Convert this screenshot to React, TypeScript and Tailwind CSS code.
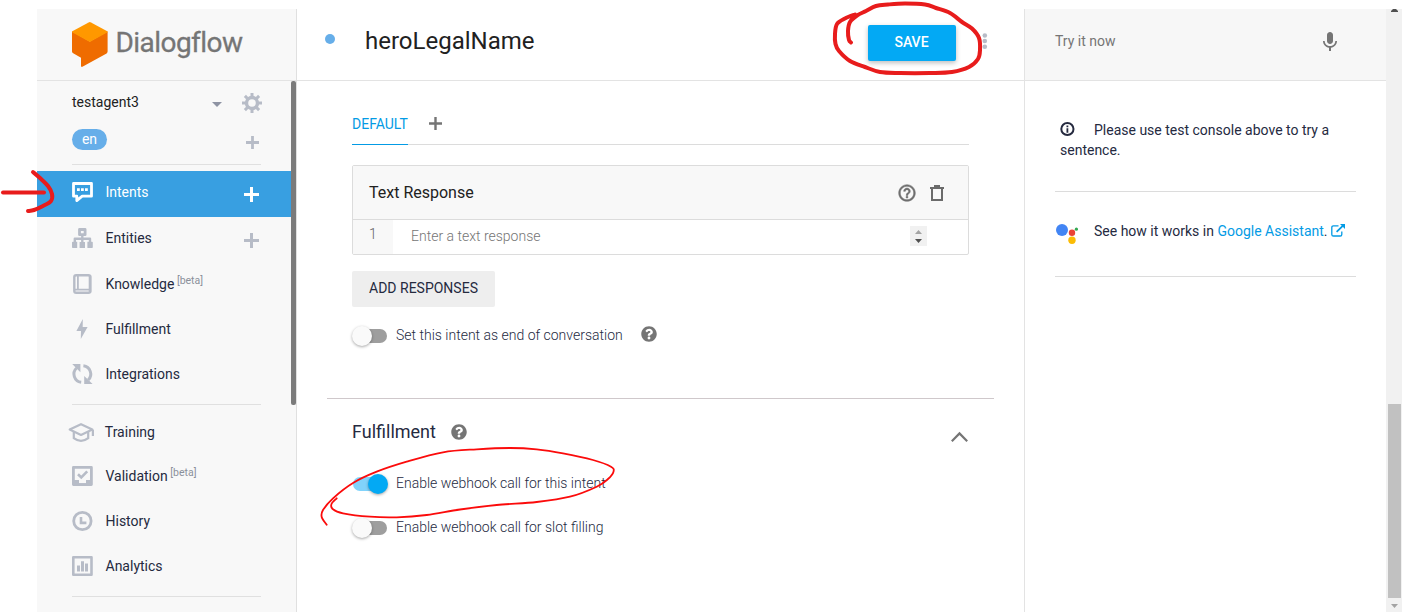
import React from "react";
import { FaQuestionCircle } from "react-icons/fa";

type Point = [number, number];

function smooth(points: Point[]): string {
  let d = `M${points[0][0]} ${points[0][1]}`;
  for (let i = 0; i < points.length - 1; i++) {
    const p0 = points[Math.max(i - 1, 0)];
    const p1 = points[i];
    const p2 = points[i + 1];
    const p3 = points[Math.min(i + 2, points.length - 1)];
    d += ` C${p1[0] + (p2[0] - p0[0]) / 6} ${p1[1] + (p2[1] - p0[1]) / 6} ${p2[0] - (p3[0] - p1[0]) / 6} ${p2[1] - (p3[1] - p1[1]) / 6} ${p2[0]} ${p2[1]}`;
  }
  return d;
}

const saveLoop: Point[] = [
  [855, 14.5], [845, 18.5], [837, 24], [835, 34], [835.5, 44], [839, 51], [850, 61], [865, 67], [880, 72], [900, 73],
  [930, 73], [952, 72], [969, 67], [978, 59], [980, 50], [979, 38], [972, 28.5], [962, 22], [950, 13], [936, 8],
  [925, 4.5], [905, 3.5], [888, 4.5], [876, 6], [866, 11], [857, 15.5], [850, 22], [848, 31], [849, 40], [851, 42.5],
];
const arrowHead: Point[] = [[33, 172], [40, 178], [48, 186], [52, 194], [51, 201], [43, 206], [34, 210], [28, 211]];
const webhookLoop: Point[] = [
  [326.7, 524.7], [321.7, 517], [323, 510], [333, 498.3], [353, 483], [376.7, 471.7], [406.7, 461.7], [443, 452.3],
  [476.7, 449.3], [510, 448], [536.7, 449.3], [563, 453.3], [593, 460], [611, 466.7], [613.5, 471.7], [608, 479],
  [596.7, 486.7], [570, 496.7], [536.7, 502], [496.7, 505], [460, 509.5], [426.7, 515], [396.7, 517.3], [370, 516.7],
  [343, 513.3], [332.7, 509], [331.5, 504], [336.7, 498.3],
];

const Svg = ({ w, h, children }: { w: number; h: number; children: React.ReactNode }) => (
  <svg width={w} height={h} viewBox={`0 0 ${w} ${h}`} fill="none" className="block shrink-0 overflow-visible">
    {children}
  </svg>
);

const Plus = ({ size, color, stroke }: { size: number; color: string; stroke: number }) => (
  <Svg w={size} h={size}>
    <path d={`M${size / 2} 0V${size}M0 ${size / 2}H${size}`} stroke={color} strokeWidth={stroke} />
  </Svg>
);

const G = "#b7bcc7";

const icons = {
  intents: (
    <Svg w={21} h={20}>
      <path d="M1.5 1.5H19.5V14.2H10.2L4.8 18.6V14.2H1.5Z" stroke="#fff" strokeWidth="2.8" strokeLinejoin="round" />
      <path d="M5 6.2h2.8v2.8H5zM9 6.2h2.8v2.8H9zM13 6.2h2.8v2.8h-2.8z" fill="#fff" />
    </Svg>
  ),
  entities: (
    <Svg w={21} h={20}>
      <path d="M7.5 1.5h5.6v5.2H7.5z" stroke={G} strokeWidth="2.8" strokeLinejoin="round" />
      <path d="M10.3 7V14M2.8 14.5V10.8H18V14.5" stroke={G} strokeWidth="2.4" strokeLinejoin="round" />
      <path d="M0 14.5q0-.8.8-.8H5.2V20H.8Q0 20 0 19.2zM7.6 14h5.4v6H7.6zM15.4 13.7H20q.8 0 .8.8V19.2q0 .8-.8.8H15.4z" fill={G} />
    </Svg>
  ),
  knowledge: (
    <Svg w={19} h={20}>
      <rect x="1.3" y="1.2" width="16" height="17.6" rx="1.8" stroke={G} strokeWidth="2.4" />
      <path d="M4.9 2v13.5M1.5 15.6H17" stroke={G} strokeWidth="1.8" />
      <path d="M17 1.5v17" stroke={G} strokeWidth="2.6" />
    </Svg>
  ),
  fulfillment: (
    <Svg w={12} h={20}>
      <path d="M6.8 0L.4 12H5L4.8 20L11.6 8H6.7Z" fill={G} />
    </Svg>
  ),
  integrations: (
    <Svg w={21} h={20}>
      <path d="M9.2 18.3A8.3 8.3 0 0 1 4.6 4M11.4 1.8A8.3 8.3 0 0 1 16.2 16" stroke={G} strokeWidth="3" />
      <path d="M.2 0H8.4V8.2ZM12.2 12V20H20.6Z" fill={G} />
    </Svg>
  ),
  training: (
    <Svg w={26} h={19}>
      <path d="M1.7 6.6L13 1.2L24.3 6.6L13 12Z" stroke={G} strokeWidth="2.2" strokeLinejoin="round" />
      <path d="M5.8 9V15.2Q9 17.8 13 17.8T20.2 15.2V9M24.9 6.8V13" stroke={G} strokeWidth="2.2" />
    </Svg>
  ),
  validation: (
    <Svg w={21} h={20}>
      <path d="M1.4 1.4H19.4V18.6H1.4Z" stroke={G} strokeWidth="2.8" strokeLinejoin="round" />
      <path d="M2 14H7V17.2H14V14H19V19H2Z" fill={G} />
      <path d="M6 8.2L9.3 11.4L15.2 5.4" stroke={G} strokeWidth="2.6" />
    </Svg>
  ),
  history: (
    <Svg w={21} h={20}>
      <circle cx="10.4" cy="10" r="8.7" stroke={G} strokeWidth="2.8" />
      <path d="M9 6V11.9H14.4" stroke={G} strokeWidth="2.6" />
    </Svg>
  ),
  analytics: (
    <Svg w={21} h={20}>
      <path d="M1.3 1.3H19.5V18.7H1.3Z" stroke={G} strokeWidth="2.6" strokeLinejoin="round" />
      <path d="M5 9.6h3V15.4H5zM9 5.2h3V15.4H9zM13 7.6h3V15.4h-3z" fill={G} />
    </Svg>
  ),
};

function NavRow({ icon, label, beta, plus, active, className }: {
  icon: React.ReactNode; label: string; beta?: boolean; plus?: boolean; active?: boolean; className: string;
}) {
  return (
    <div className={`flex items-center pl-[32px] pr-[32px] ${active ? "bg-[#389fe1] text-white" : "text-[#252a3f]"} ${className}`}>
      <span className="flex w-[26px] shrink-0 justify-center">{icon}</span>
      <span className="ml-[10.5px] text-[14px] leading-[20px]">{label}</span>
      {beta && <span className="mb-[7px] ml-[2.5px] text-[10.5px] leading-[12px] text-[#8b909b]">[beta]</span>}
      {plus && (
        <span className="mt-[4px] ml-auto">
          <Plus size={15} stroke={3} color={active ? "#fff" : G} />
        </span>
      )}
    </div>
  );
}

const Toggle = ({ on }: { on?: boolean }) => (
  <span className="relative block h-5 w-9 shrink-0">
    <span className={`absolute top-[3px] left-px h-[14px] w-[34px] rounded-full ${on ? "bg-[#81d3fb]" : "bg-[#9e9e9e]"}`} />
    <span className={`absolute top-0 h-5 w-5 rounded-full shadow-[0_1px_3px_rgba(0,0,0,0.35)] ${on ? "left-4 bg-[#03a9f4]" : "left-0 bg-[#fafafa]"}`} />
  </span>
);

function Sidebar() {
  return (
    <aside className="flex w-[260px] shrink-0 flex-col border-r border-[#e0e0e0] bg-[#f8f8f8]">
      <div className="flex h-[72px] shrink-0 items-start border-b border-[#e3e3e3] pl-[35px] pt-[13px]">
        <Svg w={36} h={45}>
          <path d="M0 9.2L17.8 19.5L35.6 9.2V29.5Q35.6 30.8 34.6 31.4L10.4 44.8Q9 45.4 9 43.8V35.8L1.2 31.3Q0 30.6 0 29.4Z" fill="#ef6c00" />
          <path d="M0 10.2Q0 9.6 .8 9.1L16.6 .4Q17.8-.2 19 .4L34.8 9.1Q35.6 9.6 35.6 10.2L17.8 20Z" fill="#ff9800" />
        </Svg>
        <span className="ml-[7.5px] mt-[4px] text-[28px] leading-[34px] tracking-[-0.55px] text-[#757575] [-webkit-text-stroke:0.3px_#757575] [font-variant-ligatures:none]">Dialogflow</span>
      </div>
      <div className="flex min-h-0 flex-1">
        <nav className="w-[254px] shrink-0">
          <div className="flex h-[43px] items-center pl-[35px] pr-[29px]">
            <span className="mb-[2px] text-[14px] leading-[20px] text-[#212121]">testagent3</span>
            <span className="mt-[3px] ml-auto mr-[20px]">
              <Svg w={10} h={5}><path d="M0 0H10L5 5Z" fill="#8e93a3" /></Svg>
            </span>
            <Svg w={20} h={20}>
              <circle cx="10" cy="10" r="5.5" stroke={G} strokeWidth="3.4" />
              <path d="M10 0V4M10 16V20M0 10H4M16 10H20M2.9 2.9L5.7 5.7M14.3 14.3L17.1 17.1M2.9 17.1L5.7 14.3M14.3 5.7L17.1 2.9" stroke={G} strokeWidth="3" />
            </Svg>
          </div>
          <div className="flex h-[31px] items-center pl-[35px] pr-[33px]">
            <span className="h-[21px] w-[35px] rounded-full bg-[#66aee9] text-center text-[14px] leading-[21px] text-white">en</span>
            <span className="ml-auto mt-[5px] mr-[-1px]"><Plus size={13} stroke={2.8} color={G} /></span>
          </div>
          <div className="mt-[9px] ml-[35px] mr-[30px] h-px bg-[#e0e0e0]" />
          <NavRow active plus icon={icons.intents} label="Intents" className="mt-[6px] h-[46px] pb-[4px]" />
          <NavRow plus icon={icons.entities} label="Entities" className="h-[46px] pb-[4px]" />
          <NavRow beta icon={icons.knowledge} label="Knowledge" className="h-[44px] pb-[2px]" />
          <NavRow icon={icons.fulfillment} label="Fulfillment" className="h-[44px]" />
          <NavRow icon={icons.integrations} label="Integrations" className="h-[46px]" />
          <div className="mt-[7px] ml-[35px] mr-[30px] h-px bg-[#e0e0e0]" />
          <NavRow icon={icons.training} label="Training" className="mt-[5px] -ml-[0.7px] h-[44px]" />
          <NavRow beta icon={icons.validation} label="Validation" className="h-[44px]" />
          <NavRow icon={icons.history} label="History" className="h-[46px]" />
          <NavRow icon={icons.analytics} label="Analytics" className="h-[44px]" />
          <div className="mt-[8px] ml-[35px] mr-[30px] h-px bg-[#e0e0e0]" />
        </nav>
        <div className="h-[324px] w-[5px] rounded-[2px] bg-[#7b7b7b]" />
      </div>
    </aside>
  );
}

function Main() {
  return (
    <main className="flex w-[728px] shrink-0 flex-col border-r border-[#e3e3e3] bg-white">
      <header className="flex h-[72px] items-center border-b border-[#e3e3e3] pl-[28px]">
        <span className="mb-[11px] h-[10px] w-[10px] rounded-full bg-[#66aee9]" />
        <span className="mb-[7px] ml-[30px] text-[24px] leading-[32px] text-[#212121]">heroLegalName</span>
        <button className="mb-[4px] ml-auto h-[36px] w-[88px] rounded-[2px] bg-[#03a9f4] pr-[1px] pb-[2px] text-[14px] font-medium leading-[34px] text-white shadow-[0_2px_5px_rgba(0,0,0,0.26)]">SAVE</button>
        <span className="mb-[8px] ml-[26px] mr-[37px]">
          <Svg w={5} h={16}>
            <circle cx="2.8" cy="2.5" r="2.3" fill={G} /><circle cx="2.8" cy="8" r="2.3" fill={G} /><circle cx="2.8" cy="13.7" r="2.3" fill={G} />
          </Svg>
        </span>
      </header>
      <section className="pl-[55px] pr-[55px] pt-[22px]">
        <div className="flex h-[42px] border-b border-[#dcdcdc]">
          <span className="-mb-px h-[42px] w-[56px] border-b border-[#039be5] text-[14px] leading-[42px] text-[#039be5]">DEFAULT</span>
          <span className="ml-[20.5px] mt-[13.5px]"><Plus size={13} stroke={2.4} color="#757575" /></span>
        </div>
        <div className="mt-[20px] rounded-[2px] border border-[#dcdcdc]">
          <div className="flex h-[54px] items-center border-b border-[#dcdcdc] bg-[#f8f8f8] pl-[16px] pr-[24px]">
            <span className="text-[16px] leading-[24px] text-[#212121]">Text Response</span>
            <svg width="20" height="20" viewBox="0 0 24 24" fill="#6e6e6e" stroke="#6e6e6e" strokeWidth="0.6" className="ml-auto">
              <path d="M11 18h2v-2h-2v2zm1-16C6.48 2 2 6.48 2 12s4.48 10 10 10 10-4.48 10-10S17.52 2 12 2zm0 18c-4.41 0-8-3.59-8-8s3.59-8 8-8 8 3.59 8 8-3.59 8-8 8zm0-14c-2.21 0-4 1.79-4 4h2c0-1.1.9-2 2-2s2 .9 2 2c0 2-3 1.75-3 5h2c0-2.25 3-2.5 3-5 0-2.21-1.79-4-4-4z" />
            </svg>
            <span className="ml-[13px]">
              <Svg w={14} h={16}>
                <path d="M0 3H14M2 3.5V15H12V3.5M4 1H10" stroke="#6b6b6b" strokeWidth="2" />
              </Svg>
            </span>
          </div>
          <div className="flex h-[34px]">
            <span className="w-[40px] bg-[#f8f8f8] pl-[16px] text-[14px] font-light leading-[28px] text-[#616161]">1</span>
            <span className="pl-[18px] text-[14px] font-light leading-[32px] text-[#757575]">Enter a text response</span>
            <span className="mt-[6px] mr-[41px] ml-auto flex h-[20px] w-[17px] flex-col items-center justify-between bg-[#f1f1f1] py-[3px]">
              <Svg w={7} h={4}><path d="M0 4H7L3.5 0Z" fill="#a3a3a3" transform="translate(0 1)" /></Svg>
              <Svg w={7} h={4}><path d="M0 0H7L3.5 4Z" fill="#505050" /></Svg>
            </span>
          </div>
        </div>
        <button className="mt-[16px] block h-[36px] w-[143px] rounded-[2px] bg-[#eeeeee] pb-[2px] text-[14px] leading-[34px] text-[#252a3f]">ADD RESPONSES</button>
        <div className="mt-[19px] flex h-[20px] items-center">
          <Toggle />
          <span className="mb-[2px] ml-[8px] text-[14px] font-light leading-[20px] text-[#252a3f]">Set this intent as end of conversation</span>
          <FaQuestionCircle className="mb-[4px] ml-[18px] text-[#757575]" size={16} />
        </div>
      </section>
      <div className="mt-[52px] ml-[30px] mr-[30px] h-px shrink-0 bg-[#cfc8cb]" />
      <section className="pl-[55px] pr-[55px] pt-[21px]">
        <div className="flex h-[24px] items-center">
          <span className="text-[18px] leading-[24px] text-[#252a3f]">Fulfillment</span>
          <FaQuestionCircle className="ml-[15px] text-[#757575]" size={16} />
          <span className="mt-[10px] mr-[1px] ml-auto">
            <Svg w={17} h={10}><path d="M.8 9.2L8.5 1.4L16.2 9.2" stroke="#757575" strokeWidth="2.2" /></Svg>
          </span>
        </div>
        <div className="mt-[30px] flex h-[20px] items-center">
          <Toggle on />
          <span className="mb-[2px] ml-[8px] text-[14px] font-light leading-[20px] text-[#252a3f]">Enable webhook call for this intent</span>
        </div>
        <div className="mt-[24px] flex h-[20px] items-center">
          <Toggle />
          <span className="mb-[2px] ml-[8px] text-[14px] font-light leading-[20px] text-[#252a3f]">Enable webhook call for slot filling</span>
        </div>
      </section>
    </main>
  );
}

function Console() {
  return (
    <aside className="flex w-[361px] shrink-0 flex-col bg-white">
      <header className="flex h-[72px] items-center justify-between border-b border-[#e3e3e3] bg-[#f7f7f7] pl-[30px] pr-[44px] pb-[7px]">
        <span className="text-[14px] leading-[20px] text-[#757575]">Try it now</span>
        <svg width="24" height="24" viewBox="0 0 24 24" fill="#757575" className="mt-[1px]">
          <path d="M12 14c1.66 0 2.99-1.34 2.99-3L15 5c0-1.66-1.34-3-3-3S9 3.34 9 5v6c0 1.66 1.34 3 3 3zm5.3-3c0 3-2.54 5.1-5.3 5.1S6.7 14 6.7 11H5c0 3.41 2.72 6.23 6 6.72V21h2v-3.28c3.28-.48 6-3.3 6-6.72h-1.7z" />
        </svg>
      </header>
      <div className="mx-[30px] h-[111px] border-b border-[#dcdcdc] pl-[5px] pt-[39px]">
        <p className="text-[14px] leading-[20px] text-[#252a3f]">
          <span className="mr-[19px] inline-block align-[-2px]">
            <Svg w={15} h={15}>
              <circle cx="7.4" cy="7" r="6.1" stroke="#252a3f" strokeWidth="2" />
              <path d="M6.5 3.4h1.8v1.8H6.5zM6.5 6.2h1.8v4.6H6.5z" fill="#252a3f" />
            </Svg>
          </span>
          Please use test console above to try a sentence.
        </p>
      </div>
      <div className="mx-[30px] flex h-[85px] items-start border-b border-[#dcdcdc] pt-[29px]">
        <span className="mt-[2px] ml-[1px]">
          <Svg w={23} h={21}>
            <circle cx="6" cy="7" r="6" fill="#4285f4" /><circle cx="16" cy="9.7" r="3.2" fill="#ea4335" />
            <circle cx="20.4" cy="6.2" r="1.6" fill="#34a853" /><circle cx="16" cy="17.2" r="3.7" fill="#fbbc05" />
          </Svg>
        </span>
        <span className="ml-[15px] text-[14px] leading-[20px] text-[#252a3f]">
          See how it works in <span className="text-[#039be5]">Google Assistant</span>.
        </span>
        <span className="mt-[3px] ml-[3px]">
          <Svg w={15} h={13}>
            <path d="M7.5 1.9H2.4Q.8 1.9 .8 3.5V10.4Q.8 12 2.4 12H9.2Q10.8 12 10.8 10.4V7.5" stroke="#039be5" strokeWidth="1.3" />
            <path d="M5.6 7.8L11.8 1.9" stroke="#039be5" strokeWidth="1.8" /><path d="M9 0H14V5Z" fill="#039be5" />
          </Svg>
        </span>
      </div>
    </aside>
  );
}

export default function App() {
  return (
    <div className="relative flex h-[612px] w-[1402px] overflow-hidden bg-white pl-[37px] pt-[9px] font-[Roboto,sans-serif]">
      <Sidebar />
      <Main />
      <Console />
      <div className="flex w-[16px] shrink-0 flex-col items-center bg-[#f1f1f1]">
        <Svg w={7} h={3}><path d="M0 3V2L2 0H5L7 2V3Z" fill="#505050" /></Svg>
        <div className="mt-[392px] h-[194px] w-[13px] bg-[#c1c1c1]" />
        <span className="mt-[6px]"><Svg w={7} h={4}><path d="M0 0H7L3.5 4Z" fill="#a3a3a3" /></Svg></span>
      </div>
      <svg className="pointer-events-none absolute inset-0" width="1402" height="612" viewBox="0 0 1402 612" fill="none" strokeLinecap="round" strokeLinejoin="round">
        <path d={smooth(saveLoop)} stroke="#e81c1c" strokeWidth="4" />
        <path d="M3 192.5H44" stroke="#e81c1c" strokeWidth="4" />
        <path d={smooth(arrowHead)} stroke="#e81c1c" strokeWidth="4" />
        <path d={smooth(webhookLoop)} stroke="#fb0b0b" strokeWidth="1.8" />
      </svg>
    </div>
  );
}
